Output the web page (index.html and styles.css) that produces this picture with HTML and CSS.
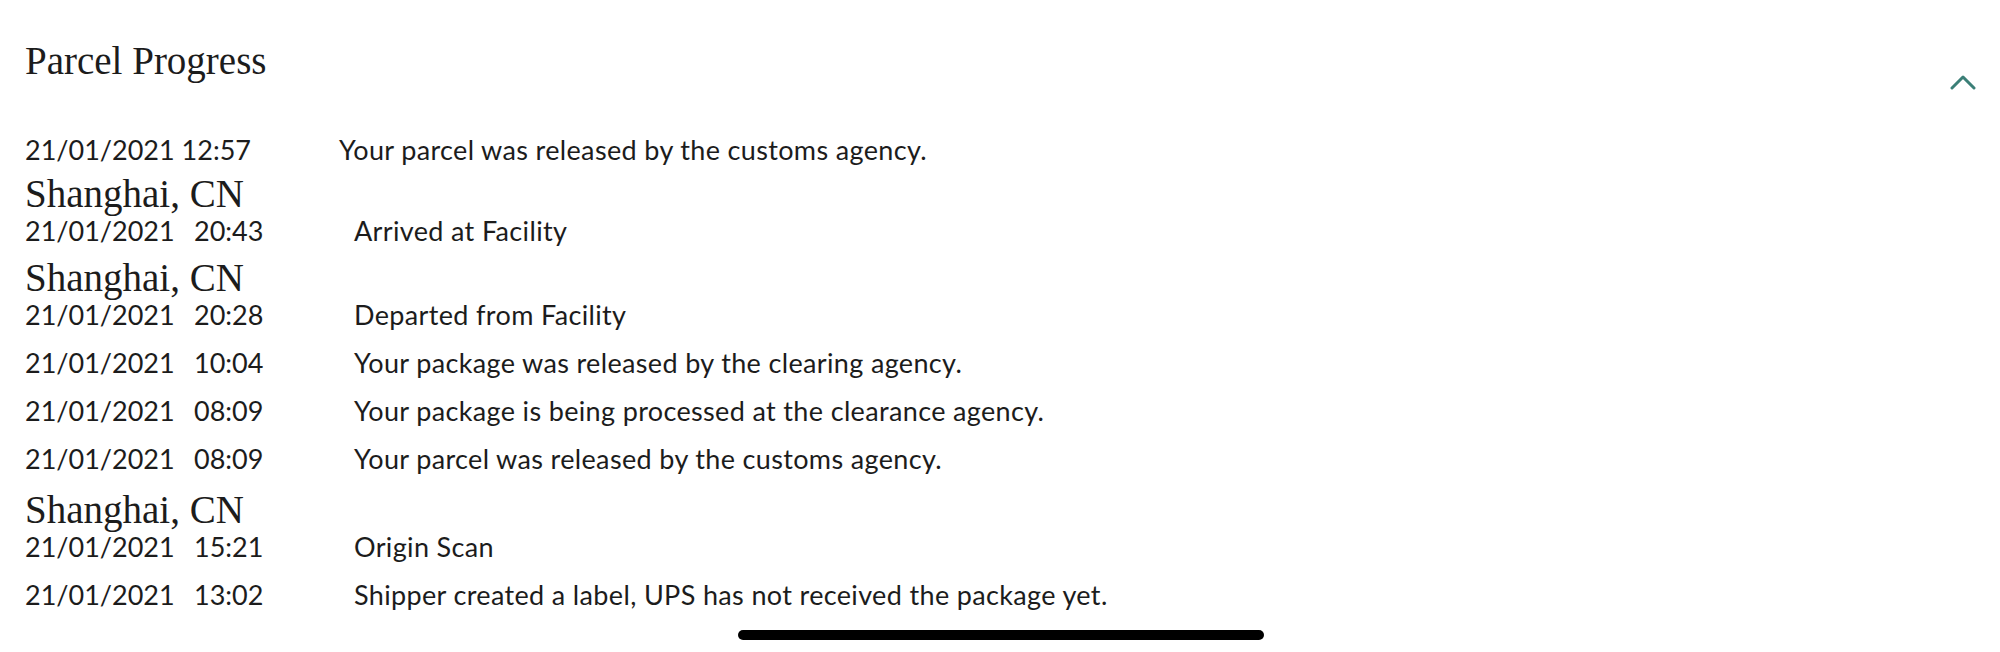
FILE: index.html
```html
<html>
<head>
  <meta charset="utf-8">
  <title>Parcel Progress</title>
  <link rel="stylesheet" href="styles.css">
</head>
<body>
  <div class="panel">
    <div class="panel-head">
      <h2 class="panel-title">Parcel Progress</h2>
      <!-- collapse toggle -->
      <svg class="toggle" width="26" height="16" viewBox="0 0 26 16">
        <polyline points="2,14 13,3 24,14" fill="none" stroke="#3b7f77" stroke-width="3" stroke-linecap="round" stroke-linejoin="round"/>
      </svg>
    </div>

    <div class="events">
      <div class="event event-first">
        <span>21/01/2021 12:57</span>
        <span class="desc">Your parcel was released by the customs agency.</span>
      </div>

      <div class="location location-tight">Shanghai, CN</div>
      <div class="event">
        <span>21/01/2021</span><span>20:43</span><span class="desc">Arrived at Facility</span>
      </div>

      <div class="location">Shanghai, CN</div>
      <div class="event">
        <span>21/01/2021</span><span>20:28</span><span class="desc">Departed from Facility</span>
      </div>
      <div class="event">
        <span>21/01/2021</span><span>10:04</span><span class="desc">Your package was released by the clearing agency.</span>
      </div>
      <div class="event">
        <span>21/01/2021</span><span>08:09</span><span class="desc">Your package is being processed at the clearance agency.</span>
      </div>
      <div class="event">
        <span>21/01/2021</span><span>08:09</span><span class="desc">Your parcel was released by the customs agency.</span>
      </div>

      <div class="location location-loose">Shanghai, CN</div>
      <div class="event">
        <span>21/01/2021</span><span>15:21</span><span class="desc">Origin Scan</span>
      </div>
      <div class="event">
        <span>21/01/2021</span><span>13:02</span><span class="desc">Shipper created a label, UPS has not received the package yet.</span>
      </div>
    </div>

    <div class="home-bar"></div>
  </div>
</body>
</html>
```

FILE: styles.css
```css
body {
  margin: 0;
  background: #ffffff;
  color: #1c1c1c;
}

.panel {
  padding: 0 24px 0 25px;
}

.panel-head {
  display: flex;
  justify-content: space-between;
  align-items: flex-start;
  padding-top: 37px;
  margin-bottom: 36px;
}

.panel-title {
  margin: 0;
  font-family: "Liberation Serif", serif;
  font-weight: normal;
  font-size: 39px;
  line-height: 48px;
}

.toggle {
  margin-top: 37px;
}

.event {
  display: grid;
  grid-template-columns: 169px 160px 1fr;
  height: 48px;
  font-family: Lato, "Liberation Sans", sans-serif;
  font-size: 27px;
  line-height: 48px;
  white-space: nowrap;
}

.event-first {
  grid-template-columns: 314px 1fr;
}

.desc {
  letter-spacing: 0.35px;
}

.location {
  font-family: "Liberation Serif", serif;
  font-size: 39px;
  line-height: 26px;
  padding-top: 10px;
}

.location-tight {
  padding-top: 7px;
}

.location-loose {
  padding-top: 14px;
}

.home-bar {
  width: 526px;
  height: 10px;
  margin: 11px auto 0;
  border-radius: 5px;
  background: #000000;
}
```
